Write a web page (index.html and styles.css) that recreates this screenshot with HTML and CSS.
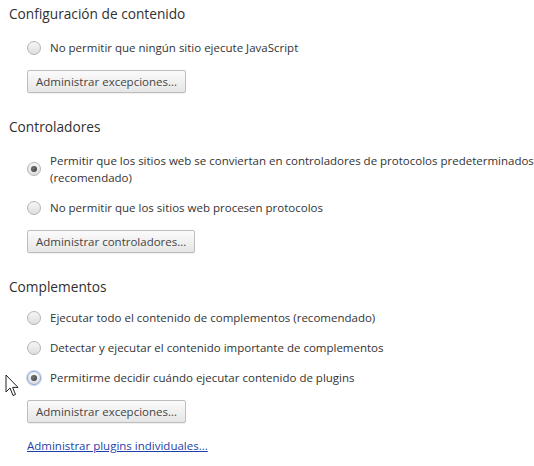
FILE: index.html
```html
<!DOCTYPE html>
<html lang="es">
<head>
  <meta charset="UTF-8" />
  <title>Configuración de contenido</title>
  <link rel="stylesheet" href="styles.css">
</head>
<body>

  <section class="settings-section">
    <h3>Configuración de contenido</h3>
    <div class="options">
      <label class="radio-row">
        <span class="radio"></span>
        <span class="radio-label">No permitir que ningún sitio ejecute JavaScript</span>
      </label>
    </div>
    <button class="btn">Administrar excepciones...</button>
  </section>

  <section class="settings-section">
    <h3>Controladores</h3>
    <div class="options">
      <label class="radio-row">
        <span class="radio checked"></span>
        <span class="radio-label">Permitir que los sitios web se conviertan en controladores de protocolos predeterminados (recomendado)</span>
      </label>
      <label class="radio-row">
        <span class="radio"></span>
        <span class="radio-label">No permitir que los sitios web procesen protocolos</span>
      </label>
    </div>
    <button class="btn">Administrar controladores...</button>
  </section>

  <section class="settings-section compact">
    <h3>Complementos</h3>
    <div class="options">
      <label class="radio-row">
        <span class="radio"></span>
        <span class="radio-label">Ejecutar todo el contenido de complementos (recomendado)</span>
      </label>
      <label class="radio-row">
        <span class="radio"></span>
        <span class="radio-label">Detectar y ejecutar el contenido importante de complementos</span>
      </label>
      <label class="radio-row">
        <span class="radio checked focused"></span>
        <span class="radio-label">Permitirme decidir cuándo ejecutar contenido de plugins</span>
      </label>
    </div>
    <button class="btn">Administrar excepciones...</button>
    <a class="link" href="#">Administrar plugins individuales...</a>
  </section>

  <!-- mouse pointer sitting over the page -->
  <svg class="cursor" width="14" height="24" viewBox="0 0 14 24" aria-hidden="true">
    <path d="M1 1 L1 18 L5 14 L8 21.5 L10.5 20.5 L7.6 13.4 L13 13.4 Z" fill="#fff" stroke="#222" stroke-width="1" stroke-linejoin="round"/>
  </svg>

</body>
</html>
```

FILE: styles.css
```css
body {
  margin: 0;
  padding: 4px 0 0 9px;
  background: #fff;
  color: #333;
  font-family: 'Open Sans', 'Noto Sans', sans-serif;
  font-size: 11.5px;
  position: relative;
  height: 462px;
  overflow: hidden;
}

h3 {
  margin: 0;
  font-size: 13.7px;
  font-weight: 400;
  line-height: 20px;
  color: #303030;
}

.settings-section {
  display: flex;
  flex-direction: column;
  align-items: flex-start;
  margin-bottom: 24px;
}

.options {
  display: flex;
  flex-direction: column;
  gap: 13px;
  margin: 15px 0 0 18px;
}

/* last block sits a little tighter under its title */
.compact .options {
  margin-top: 12px;
}

.radio-row {
  display: flex;
  align-items: center;
  gap: 9px;
  line-height: 17px;
}

.radio {
  flex-shrink: 0;
  width: 12px;
  height: 12px;
  border: 1px solid #b4b4b4;
  border-radius: 50%;
  background: linear-gradient(#f6f6f6, #dedede);
  position: relative;
}

.radio.checked::after {
  content: '';
  position: absolute;
  left: 3px;
  top: 3px;
  width: 6px;
  height: 6px;
  border-radius: 50%;
  background: radial-gradient(circle at 40% 40%, #777, #333);
}

.radio.focused {
  border-color: #8aa4d6;
  box-shadow: 0 0 0 1px #c9d6ef;
}

.btn {
  margin: 14px 0 0 18px;
  height: 23px;
  padding: 0 8px;
  font-family: inherit;
  font-size: 11.5px;
  color: #444;
  background: linear-gradient(#fbfbfb, #e6e6e6);
  border: 1px solid #bdbdbd;
  border-radius: 2px;
  box-shadow: 0 1px 0 rgba(0, 0, 0, 0.06);
}

.link {
  margin: 14px 0 0 18px;
  line-height: 17px;
  color: #1f3fa8;
  text-decoration: underline;
}

.cursor {
  position: absolute;
  left: 5px;
  top: 374px;
}
```
